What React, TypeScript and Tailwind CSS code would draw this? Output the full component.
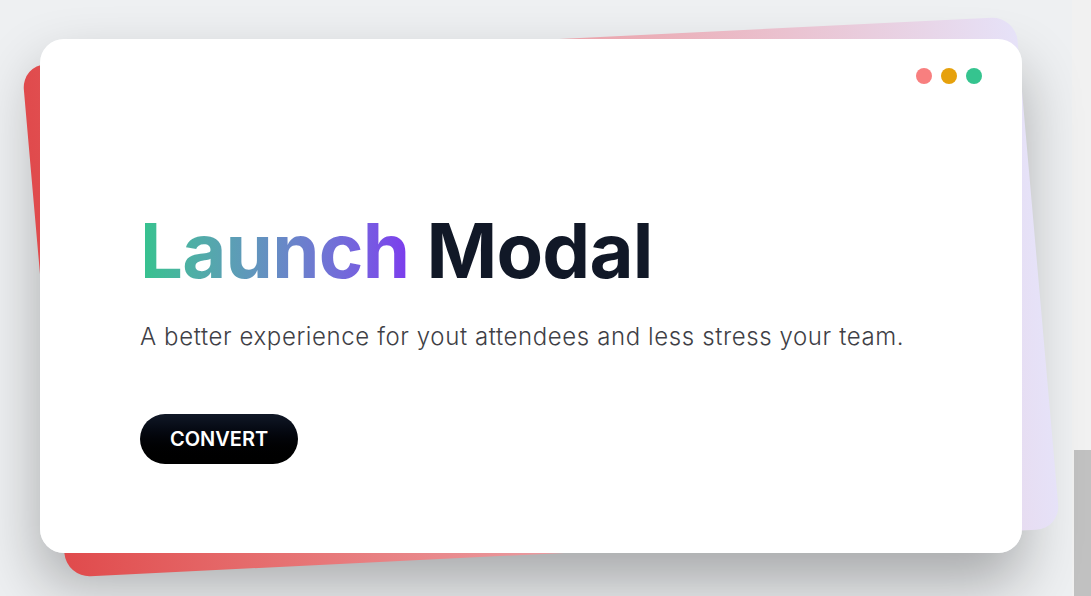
export default function App() {
  return (
    <div className="h-screen flex bg-[#eef0f2] font-[Inter,sans-serif] overflow-hidden">
      <main className="flex-1 pt-[39px] pl-10">
        <div className="relative w-[982px] h-[514px] rounded-3xl shadow-[0_30px_60px_rgba(0,0,0,0.3)]">
          {/* Tilted card behind */}
          <div className="absolute left-[2px] top-[2px] w-[998px] h-[512px] rounded-3xl bg-gradient-to-r from-[#e04a4c] to-[#e6e2f8] skew-x-[5deg] -skew-y-[2.8deg]" />

          {/* Modal card */}
          <div className="relative h-full rounded-3xl bg-white flex flex-col">
            <div className="flex justify-end gap-[9px] pt-[29px] pr-[40px]">
              <span className="w-4 h-4 rounded-full bg-[#f87f7f]" />
              <span className="w-4 h-4 rounded-full bg-[#e6a10c]" />
              <span className="w-4 h-4 rounded-full bg-[#35c48f]" />
            </div>

            <div className="pl-[100px] pt-[128px]">
              <h1 className="text-[76px] leading-none font-bold tracking-[-0.01em] text-[#111827]">
                <span className="bg-gradient-to-r from-[#34c38d] to-[#7c3aed] bg-clip-text text-transparent">Launch</span> Modal
              </h1>
              <p className="mt-[31px] text-[24px] font-light tracking-wide text-[#3f3f46]">
                A better experience for yout attendees and less stress your team.
              </p>
              <button className="mt-[59px] h-[50px] px-[30px] rounded-full bg-gradient-to-b from-[#111827] to-black text-white text-xl font-semibold">
                CONVERT
              </button>
            </div>
          </div>
        </div>
      </main>

      {/* scrollbar */}
      <aside className="w-[19px] bg-[#f1f1f1] flex flex-col justify-end pl-[2px]">
        <div className="h-[146px] bg-[#c1c1c1]" />
      </aside>
    </div>
  );
}
